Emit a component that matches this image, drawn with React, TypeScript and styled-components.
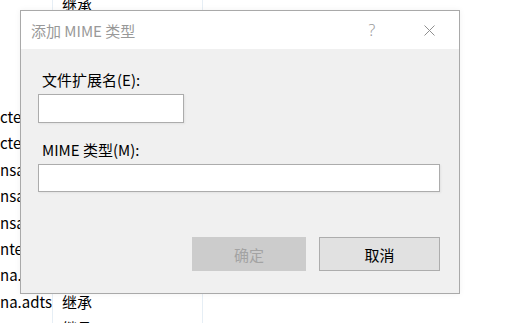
import React from "react";
import styled, { createGlobalStyle } from "styled-components";

const GlobalStyle = createGlobalStyle`
  html, body {
    margin: 0;
    padding: 0;
    background: #ffffff;
  }
  body {
    font-family: "Noto Sans CJK SC", "Noto Sans", sans-serif;
    font-size: 15px;
    color: #000;
  }
`;

const $Screen = styled.div`
  position: relative;
  width: 521px;
  height: 323px;
  overflow: hidden;
  background: #fff;
`;

const $List = styled.div`
  display: flex;
  flex-direction: column;
`;

const $Row = styled.div<{ $first?: boolean }>`
  display: flex;
  height: ${(p) => (p.$first ? "24.6px" : "26.4px")};
  align-items: ${(p) => (p.$first ? "flex-start" : "center")};
  line-height: ${(p) => (p.$first ? "10px" : "20px")};
`;

const $NameCell = styled.div`
  width: 53px;
  height: 100%;
  overflow: hidden;
  white-space: nowrap;
  border-right: 1px solid #e6eef5;
  box-sizing: border-box;
  display: flex;
  align-items: inherit;
`;

const $TypeCell = styled.div`
  width: 150px;
  height: 100%;
  padding-left: 9px;
  box-sizing: border-box;
  border-right: 1px solid #e6eef5;
  display: flex;
  align-items: inherit;
`;

const $Dialog = styled.div`
  position: absolute;
  left: 20px;
  top: 10px;
  width: 440px;
  height: 284px;
  box-sizing: border-box;
  border: 1px solid #a9a9a9;
  background: #f0f0f0;
  display: flex;
  flex-direction: column;
  box-shadow: 0 0 6px rgba(0, 0, 0, 0.06);
`;

const $TitleBar = styled.div`
  height: 38px;
  background: #fff;
  display: flex;
  align-items: center;
  padding-left: 10px;
  color: #999;
  font-size: 15px;
`;

const $TitleButtons = styled.div`
  margin-left: auto;
  display: flex;
  gap: 11px;
  padding-right: 7px;
`;

const $TitleButton = styled.div`
  width: 46px;
  height: 38px;
  display: flex;
  align-items: center;
  justify-content: center;
  color: #9a9a9a;
  font-family: "Noto Sans", sans-serif;
  font-weight: 300;
  font-size: 16px;
`;

const $Body = styled.div`
  flex: 1;
  display: flex;
  flex-direction: column;
  padding: 21px 19px 0 17px;
`;

const $Label = styled.div<{ $gap?: number }>`
  padding-left: 4px;
  line-height: 20px;
  margin-top: ${(p) => p.$gap ?? 0}px;
`;

const $Field = styled.div<{ $width?: number; $height: number }>`
  margin-top: 4px;
  width: ${(p) => (p.$width ? `${p.$width}px` : "auto")};
  height: ${(p) => p.$height}px;
  box-sizing: border-box;
  background: #fff;
  border: 1px solid #acacac;
  box-shadow: 1px 1px 2px rgba(0, 0, 0, 0.06);
`;

const $Buttons = styled.div`
  margin-top: 45px;
  display: flex;
  justify-content: flex-end;
  gap: 13px;
`;

const $Button = styled.div<{ $disabled?: boolean; $width: number }>`
  width: ${(p) => p.$width}px;
  height: 34px;
  box-sizing: border-box;
  display: flex;
  align-items: center;
  justify-content: center;
  border: 1px solid ${(p) => (p.$disabled ? "#cccccc" : "#adadad")};
  background: ${(p) => (p.$disabled ? "#cccccc" : "#e1e1e1")};
  color: ${(p) => (p.$disabled ? "#a3a3a3" : "#000")};
  font-size: 15px;
`;

// the rows behind the dialog; only the parts that show are filled in
const rows = [
  { name: "", type: "继承" },
  { name: "", type: "" },
  { name: "", type: "" },
  { name: "", type: "" },
  { name: "cte", type: "" },
  { name: "cte", type: "" },
  { name: "nsa", type: "" },
  { name: "nsa", type: "" },
  { name: "nsa", type: "" },
  { name: "nter", type: "" },
  { name: "na.a", type: "" },
  { name: "na.adts", type: "继承" },
  { name: "", type: "继承" },
];

const CloseIcon = () => (
  <svg width="11" height="11" viewBox="0 0 11 11">
    <path d="M0.5 0.5 L10.5 10.5 M10.5 0.5 L0.5 10.5" stroke="#8f8f8f" strokeWidth="1" fill="none" />
  </svg>
);

const App = () => {
  return (
    <>
      <GlobalStyle />
      <$Screen>
        <$List>
          {rows.map((r, i) => (
            <$Row key={i} $first={i === 0}>
              <$NameCell>{r.name}</$NameCell>
              <$TypeCell>{r.type}</$TypeCell>
            </$Row>
          ))}
        </$List>

        <$Dialog>
          <$TitleBar>
            <span>添加 MIME 类型</span>
            <$TitleButtons>
              <$TitleButton>?</$TitleButton>
              <$TitleButton>
                <CloseIcon />
              </$TitleButton>
            </$TitleButtons>
          </$TitleBar>
          <$Body>
            <$Label>文件扩展名(E):</$Label>
            <$Field $width={146} $height={29} />
            <$Label $gap={17}>MIME 类型(M):</$Label>
            <$Field $height={28} />
            <$Buttons>
              <$Button $disabled $width={114}>确定</$Button>
              <$Button $width={121}>取消</$Button>
            </$Buttons>
          </$Body>
        </$Dialog>
      </$Screen>
    </>
  );
};

export default App;
